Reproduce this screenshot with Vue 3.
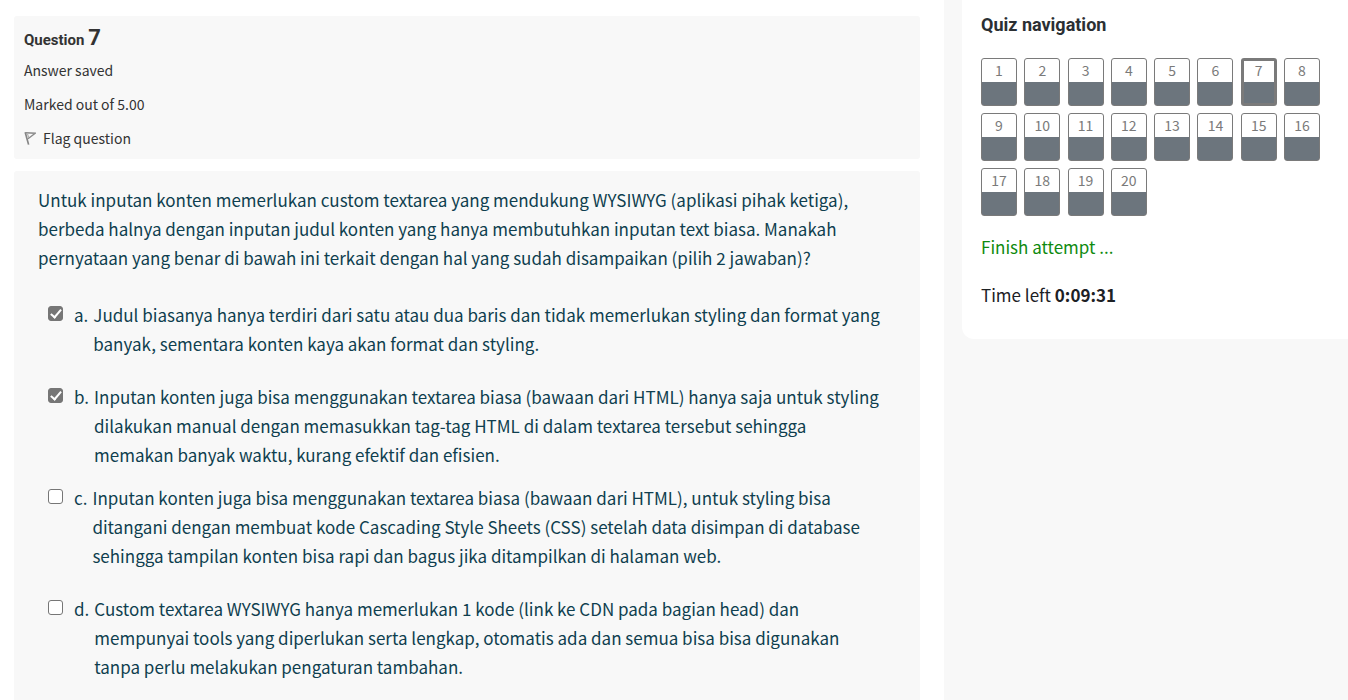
<script setup>
import { ref } from 'vue'

const options = ref([
  { id: 'a', checked: true, text: 'Judul biasanya hanya terdiri dari satu atau dua baris dan tidak memerlukan styling dan format yang banyak, sementara konten kaya akan format dan styling.' },
  { id: 'b', checked: true, tight: true, text: 'Inputan konten juga bisa menggunakan textarea biasa (bawaan dari HTML) hanya saja untuk styling dilakukan manual dengan memasukkan tag-tag HTML di dalam textarea tersebut sehingga memakan banyak waktu, kurang efektif dan efisien.' },
  { id: 'c', checked: false, text: 'Inputan konten juga bisa menggunakan textarea biasa (bawaan dari HTML), untuk styling bisa ditangani dengan membuat kode Cascading Style Sheets (CSS) setelah data disimpan di database sehingga tampilan konten bisa rapi dan bagus jika ditampilkan di halaman web.' },
  { id: 'd', checked: false, text: 'Custom textarea WYSIWYG hanya memerlukan 1 kode (link ke CDN pada bagian head) dan mempunyai tools yang diperlukan serta lengkap, otomatis ada dan semua bisa bisa digunakan tanpa perlu melakukan pengaturan tambahan.' }
])
const current = ref(7)
</script>

<template>
  <div class="page">
    <main class="main">
      <section class="info">
        <h3 class="number">Question <span class="qno">7</span></h3>
        <p class="state">Answer saved</p>
        <p class="state">Marked out of 5.00</p>
        <a class="flag" href="#">
          <svg class="flag-icon" viewBox="0 0 12 14" aria-hidden="true">
            <path d="M1.2 1.2 4.6 13.6" fill="none" stroke="#858585" stroke-width="1.7" />
            <path d="M1.6 1.8 11.2 2.2 4 7.8" fill="none" stroke="#8a8a8a" stroke-width="1.4" />
            <path d="M3.6 3 4.6 6.6" fill="none" stroke="#a0a0a0" stroke-width="1" />
          </svg>
          <span>Flag question</span>
        </a>
      </section>

      <section class="formulation">
        <p class="prompt">Untuk inputan konten memerlukan custom textarea yang mendukung WYSIWYG (aplikasi pihak ketiga), berbeda halnya dengan inputan judul konten yang hanya membutuhkan inputan text biasa. Manakah pernyataan yang benar di bawah ini terkait dengan hal yang sudah disampaikan (pilih 2 jawaban)?</p>
        <div class="answers">
          <div v-for="o in options" :key="o.id" class="option" :class="{ tight: o.tight }">
            <input :id="'opt-' + o.id" v-model="o.checked" class="tick" type="checkbox" />
            <label class="label" :for="'opt-' + o.id">
              <span>{{ o.id }}.</span>
              <span class="text">{{ o.text }}</span>
            </label>
          </div>
        </div>
      </section>
    </main>

    <aside class="side">
      <section class="card">
        <h2 class="title">Quiz navigation</h2>
        <nav class="grid" aria-label="Quiz navigation">
          <a v-for="n in 20" :key="n" href="#" class="cell" :class="{ current: n === current }" @click.prevent="current = n">
            <span class="num">{{ n }}</span>
          </a>
        </nav>
        <a class="finish" href="#">Finish attempt ...</a>
        <div class="timer">Time left <strong>0:09:31</strong></div>
      </section>
    </aside>
  </div>
</template>

<style>
body {
  margin: 0;
  background: #fff;
}
</style>

<style scoped>
.page {
  display: flex;
  min-height: 100vh;
  box-sizing: border-box;
  font-family: "Noto Sans CJK SC", "Noto Sans", sans-serif;
  font-size: 17px;
  line-height: 29px;
  color: #1d2125;
}
.main {
  flex: 1;
  min-width: 0;
  display: flex;
  flex-direction: column;
  gap: 12px;
  padding: 16px 24px 0 14px;
}
.info {
  box-sizing: border-box;
  padding: 9px 10px 10px;
  border-radius: 3px;
  background: #f8f8f8;
  font-size: 14px;
  line-height: 22px;
  color: #333;
}
.number {
  margin: 0 0 6px;
  font-family: Roboto, "Liberation Sans", sans-serif;
  font-size: 15px;
  line-height: 26px;
  font-weight: 700;
}
.qno {
  font-size: 22px;
}
.state {
  margin: 0 0 12px;
}
.flag {
  display: flex;
  align-items: center;
  gap: 7px;
  color: #333;
  text-decoration: none;
}
.flag-icon {
  width: 12px;
  height: 14px;
}
.formulation {
  flex: 1;
  padding: 14px 36px 0 24px;
  border-radius: 3px 3px 0 0;
  background: #f8f8f8;
  color: #0f3f4f;
}
.prompt {
  margin: 0;
}
.answers {
  margin-top: 28px;
}
.option {
  display: flex;
  align-items: flex-start;
  gap: 11px;
  margin-bottom: 24px;
  padding-left: 10px;
}
.option.tight {
  margin-bottom: 14px;
}
.tick {
  appearance: none;
  flex: none;
  box-sizing: border-box;
  width: 15px;
  height: 15px;
  margin: 6px 0 0;
  border: 1px solid #767676;
  border-radius: 3px;
  background: #fff;
}
.tick:checked {
  background: #767676;
}
.tick:checked::after {
  content: "";
  display: block;
  box-sizing: border-box;
  width: 6px;
  height: 11px;
  margin: 0 0 0 4px;
  border: solid #fff;
  border-width: 0 2px 2px 0;
  transform: rotate(40deg);
}
.label {
  flex: 1;
  display: flex;
  gap: 5px;
}
.text {
  flex: 1;
}
.side {
  width: 404px;
  box-sizing: border-box;
  padding-left: 18px;
  background: #f8f8f8;
}
.card {
  padding: 10px 28px 30px 19px;
  border-radius: 0 0 0 12px;
  background: #fff;
}
.title {
  margin: 0 0 19px;
  font-family: Roboto, "Liberation Sans", sans-serif;
  font-size: 18px;
  line-height: 29px;
  font-weight: 700;
  color: #2b2f33;
}
.grid {
  display: grid;
  grid-template-columns: repeat(8, 36px);
  justify-content: space-between;
  row-gap: 7px;
}
.cell {
  box-sizing: border-box;
  height: 48px;
  overflow: hidden;
  border: 1px solid #7a7a7a;
  border-radius: 3px;
  background: linear-gradient(#fff 50%, #6c757d 50%) border-box;
  text-align: center;
  text-decoration: none;
  color: #7a7a7a;
}
.cell.current {
  border-width: 3px;
}
.num {
  display: block;
  font-size: 14px;
  line-height: 22px;
}
.cell.current .num {
  margin-top: -2px;
}
.finish {
  display: block;
  margin: 16px 0 19px;
  color: #0f8a0f;
  text-decoration: none;
}
</style>
